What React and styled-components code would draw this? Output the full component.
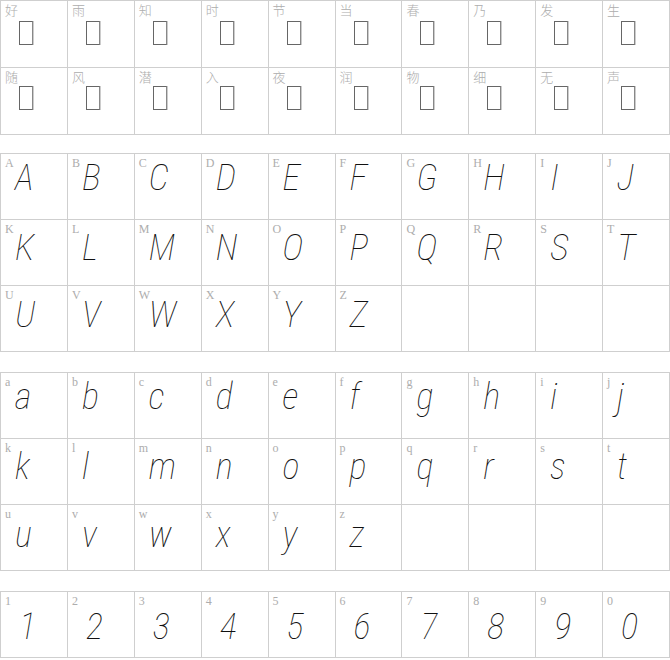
import React from 'react';
import styled, { createGlobalStyle } from 'styled-components';

const GlobalStyle = createGlobalStyle`
  html, body {
    margin: 0;
    padding: 0;
    background: #fff;
  }
`;

const Page = styled.div`
  width: 670px;
  display: flex;
  flex-direction: column;
`;

const Grid = styled.div`
  display: grid;
  grid-template-columns: repeat(10, 1fr);
  grid-auto-rows: ${props => props.rowHeight}px;
  gap: 1px;
  padding: 1px;
  margin-bottom: ${props => props.spaceAfter}px;
  background: #cfcfcf;
`;

const Cell = styled.div`
  position: relative;
  background: #fff;
`;

const Label = styled.span`
  position: absolute;
  top: 2px;
  left: 4px;
  font-family: ${props => (props.cjk ? '"Noto Sans CJK SC", serif' : '"Liberation Serif", "DejaVu Serif", serif')};
  font-size: ${props => (props.cjk ? '13px' : '12px')};
  font-weight: ${props => (props.cjk ? 300 : 400)};
  line-height: 14px;
  color: #adadad;
`;

// Glyphe affiché : la ligne baisse un peu d'une rangée à l'autre
const Glyph = styled.div`
  padding: ${props => props.top}px 0 0 ${props => props.left}px;
  font-family: Roboto, sans-serif;
  font-weight: 150;
  font-style: italic;
  font-stretch: 87.5%;
  font-size: 36px;
  line-height: 40px;
  color: #111;
`;

// Caractère absent de la police : la boîte « tofu »
const Tofu = styled.span`
  display: block;
  margin: ${props => props.top}px 0 0 18px;
  width: 12px;
  height: 22px;
  border: 1px solid #666;
  border-right-color: #888;
  box-shadow: 1px 0 0 #ccc;
`;

const sections = [
  { cjk: true, chars: '好雨知时节当春乃发生随风潜入夜润物细无声', rowHeight: 66, spaceAfter: 18, tops: [20, 18] },
  { chars: 'ABCDEFGHIJKLMNOPQRSTUVWXYZ', rowHeight: 65, spaceAfter: 20, tops: [4, 8, 9], left: 14 },
  { chars: 'abcdefghijklmnopqrstuvwxyz', rowHeight: 65, spaceAfter: 20, tops: [4, 8, 10], left: 14 },
  { chars: '1234567890', rowHeight: 65, spaceAfter: 0, tops: [15], left: 18 },
];

export default function App() {
  return (
    <>
      <GlobalStyle />
      <Page>
        {sections.map((section, i) => {
          const chars = Array.from(section.chars);
          const total = Math.ceil(chars.length / 10) * 10;
          return (
            <Grid key={i} rowHeight={section.rowHeight} spaceAfter={section.spaceAfter}>
              {Array.from({ length: total }, (_, k) => {
                const ch = chars[k];
                if (!ch) return <Cell key={k} />;
                const top = section.tops[Math.floor(k / 10)];
                return (
                  <Cell key={k}>
                    <Label cjk={section.cjk}>{ch}</Label>
                    {section.cjk ? (
                      <Tofu aria-label={ch} top={top} />
                    ) : (
                      <Glyph top={top} left={section.left}>{ch}</Glyph>
                    )}
                  </Cell>
                );
              })}
            </Grid>
          );
        })}
      </Page>
    </>
  );
}
